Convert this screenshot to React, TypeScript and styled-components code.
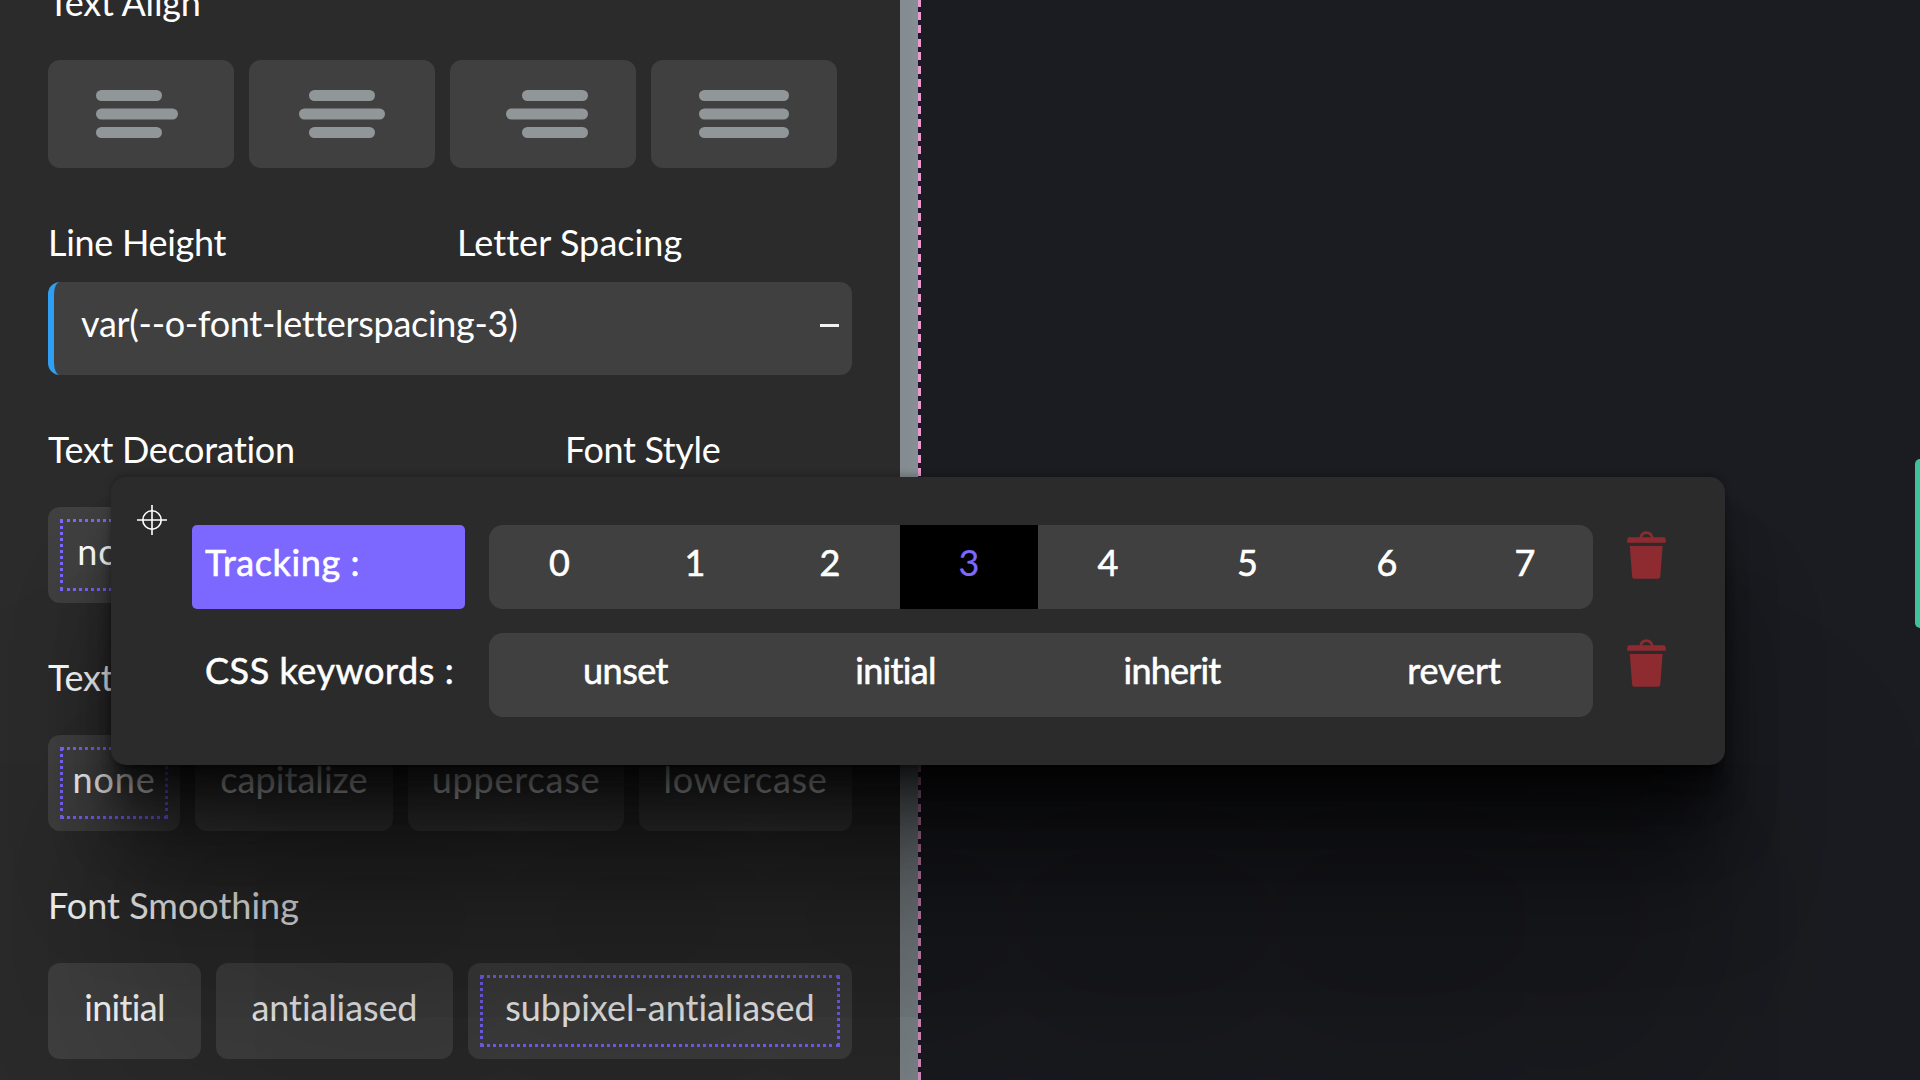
import React from 'react';
import styled, { createGlobalStyle, css } from 'styled-components';

const GlobalStyle = createGlobalStyle`
  *, *::before, *::after { box-sizing: border-box; }
  html, body { margin: 0; height: 100%; overflow: hidden; background: #1b1c21; }
`;

const Screen = styled.div`
  position: relative;
  display: flex;
  width: 1920px;
  height: 1080px;
  overflow: hidden;
  background: #1b1c21;
  color: #fff;
  font-family: Lato, 'Open Sans', sans-serif;
  font-size: 36px;
  line-height: 44px;
  font-variant-ligatures: none;
  white-space: nowrap;
`;

const Sidebar = styled.aside`
  flex: none;
  width: 900px;
  height: 1080px;
  padding: 0 48px;
  overflow: hidden;
  background: #2b2b2b;
`;

const ScrolledContent = styled.div`
  display: flex;
  flex-direction: column;
  gap: 50px;
  margin-top: -20px;
`;

const Section = styled.section<{ $gap?: number }>`
  display: flex;
  flex-direction: column;
  gap: ${(p) => p.$gap ?? 36}px;
`;

const Labels = styled.div<{ $first?: number }>`
  display: grid;
  grid-template-columns: ${(p) => (p.$first ? `${p.$first}px 1fr` : '1fr')};
  height: 45px;
`;

const SectionLabels = styled(Labels)`
  height: 44px;
  margin-bottom: 0;
`;

const Text = styled.span<{ $track?: number }>`
  letter-spacing: ${(p) => p.$track ?? 0}px;
`;

const Options = styled.div`
  display: flex;
  gap: 15px;
`;

const Option = styled.button<{ $width: number; $selected?: boolean }>`
  display: grid;
  flex: none;
  width: ${(p) => p.$width}px;
  height: 96px;
  margin-bottom: 2px;
  padding: 12px;
  border: 0;
  border-radius: 12px;
  background: #404040;
  color: inherit;
  font: inherit;

  & > span {
    display: flex;
    align-items: center;
    justify-content: center;
    padding-bottom: 8px;
    border: 3px dotted ${(p) => (p.$selected ? '#7c67ff' : 'transparent')};
  }
`;

const AlignButton = styled.button`
  display: grid;
  place-items: center;
  width: 186px;
  height: 108px;
  margin-bottom: 2px;
  padding: 0;
  border: 0;
  border-radius: 12px;
  background: #404040;
  color: #919699;
`;

const ValueField = styled.div`
  display: flex;
  align-items: center;
  justify-content: space-between;
  width: 804px;
  height: 93px;
  margin-bottom: 2px;
  padding: 0 13px 11px 27px;
  border-left: 6px solid #2f9ff4;
  border-radius: 12px;
  background: #404040;
`;

const Minus = styled.i`
  width: 19px;
  height: 3px;
  margin-top: 5px;
  background: #f2f2f2;
`;

const Resizer = styled.div`
  flex: none;
  width: 18px;
  background: linear-gradient(90deg, #858b90, #848f94);
`;

const Guide = styled.div`
  flex: none;
  width: 3px;
  background: repeating-linear-gradient(#ea9bd0 0 8px, #20152a 8px 13.42px);
  background-position: 0 -1.4px;
  background-size: 3px 1100px;
`;

const Canvas = styled.main`
  display: flex;
  flex: 1;
  justify-content: flex-end;
  padding-top: 459px;
  background: #1b1c21;
`;

const CanvasEdge = styled.div`
  width: 5px;
  height: 169px;
  border-radius: 6px 0 0 6px;
  background: #3cc29c;
`;

const shade = (a: number) => `rgb(0 0 0 / ${a}%)`;

const Popup = styled.div`
  position: absolute;
  top: 477px;
  left: 111px;
  display: flex;
  width: 1614px;
  height: 288px;
  padding: 48px 0;
  border-radius: 15px;
  background: #2b2b2b;
  box-shadow:
    0 -3px 6px 0 ${shade(20)},
    0 9px 6px -6px ${shade(29)},
    0 21px 15px -6px ${shade(30)},
    0 36px 30px -6px ${shade(33)},
    0 66px 54px -6px ${shade(36)},
    0 123px 99px -6px ${shade(37)},
    0 300px 240px -6px ${shade(33)};
`;

const Handle = styled.svg`
  flex: none;
  width: 30px;
  height: 30px;
  margin: -20.5px 25px 0 26px;
  fill: none;
  stroke: #fff;
  stroke-width: 1.6;
`;

const TokenRows = styled.div`
  display: flex;
  flex-direction: column;
  gap: 24px;
`;

const TokenRow = styled.div`
  display: flex;
  gap: 24px;
  height: 84px;
  -webkit-text-stroke: 0.6px currentColor;
`;

const TokenName = styled.div<{ $active?: boolean }>`
  display: flex;
  align-items: center;
  width: 273px;
  padding: 0 0 10px 13px;
  border-radius: 5px;
  background: ${(p) => (p.$active ? '#7c67ff' : 'transparent')};
`;

const TokenValues = styled.div<{ $columns: string }>`
  display: grid;
  grid-template-columns: ${(p) => p.$columns};
  width: 1104px;
  overflow: hidden;
  border-radius: 14px;
  background: #404040;
`;

const TokenValue = styled.div<{ $active?: boolean }>`
  display: flex;
  align-items: center;
  justify-content: center;
  padding-bottom: 10px;
  ${(p) =>
    p.$active &&
    css`
      background: #000;
      color: #7c67ff;
      -webkit-text-stroke: 0.2px currentColor;
    `}
`;

const Trash = styled.svg`
  flex: none;
  width: 40px;
  height: 48px;
  margin: 6px 0 0 9.8px;
  color: #8d2b30;
`;

const alignments: [string, [number, number][]][] = [
  ['left', [[0, 66], [0, 82], [0, 66]]],
  ['center', [[12, 66], [2, 86], [12, 66]]],
  ['right', [[24, 66], [8, 82], [24, 66]]],
  ['justify', [[0, 90], [0, 90], [0, 90]]],
];

function AlignIcon({ bars }: { bars: [number, number][] }) {
  return (
    <svg width="90" height="48" viewBox="0 0 90 48" fill="currentColor">
      {bars.map(([x, w], i) => (
        <rect key={i} x={x} y={i * 18.5} width={w} height="11" rx="5.5" />
      ))}
    </svg>
  );
}

function TrashIcon() {
  return (
    <Trash viewBox="0 0 40 48">
      <path d="M13.600 7.500C14 3.800 16.200 1.600 19.400 1.600S24.800 3.800 25.600 7.500" fill="none" stroke="currentColor" strokeWidth="2.6" />
      <path
        fill="currentColor"
        d="M2 6.200H37q1 0 1.300 1L39 10.200q.2 1.600-1.200 1.600H1.200Q-.2 11.800 0 10.200L.7 7.200Q1 6.200 2 6.200ZM2.800 15H35.600L33.300 45.600Q33.100 47.800 31 47.800H7.400Q5.300 47.800 5.100 45.600Z"
      />
    </Trash>
  );
}

type OptionItem = { text: string; width: number; track?: number; selected?: boolean };

function OptionRow({ items }: { items: OptionItem[] }) {
  return (
    <Options>
      {items.map((o) => (
        <Option key={o.text} $width={o.width} $selected={o.selected}>
          <Text $track={o.track}>{o.text}</Text>
        </Option>
      ))}
    </Options>
  );
}

export default function App() {
  return (
    <>
      <GlobalStyle />
      <Screen>
        <Sidebar>
          <ScrolledContent>
            <Section>
              <SectionLabels>
                <Text $track={-0.2}>Text Align</Text>
              </SectionLabels>
              <Options>
                {alignments.map(([name, bars]) => (
                  <AlignButton key={name} aria-label={name}>
                    <AlignIcon bars={bars} />
                  </AlignButton>
                ))}
              </Options>
            </Section>
            <Section $gap={18}>
              <SectionLabels $first={409}>
                <Text $track={-0.3}>Line Height</Text>
                <Text $track={0.08}>Letter Spacing</Text>
              </SectionLabels>
              <ValueField>
                <Text $track={-0.3}>var(--o-font-letterspacing-3)</Text>
                <Minus />
              </ValueField>
            </Section>
            <Section>
              <SectionLabels $first={517}>
                <Text $track={-0.33}>Text Decoration</Text>
                <Text $track={-0.35}>Font Style</Text>
              </SectionLabels>
              <OptionRow items={[{ text: 'none', width: 142, track: 1, selected: true }]} />
            </Section>
            <Section>
              <SectionLabels>
                <Text $track={-0.3}>Text</Text>
              </SectionLabels>
              <OptionRow
                items={[
                  { text: 'none', width: 132, track: 0.9, selected: true },
                  { text: 'capitalize', width: 198, track: 0.05 },
                  { text: 'uppercase', width: 216, track: 0.8 },
                  { text: 'lowercase', width: 213, track: 0.7 },
                ]}
              />
            </Section>
            <Section>
              <SectionLabels>
                <Text>Font Smoothing</Text>
              </SectionLabels>
              <OptionRow
                items={[
                  { text: 'initial', width: 153, track: -0.7 },
                  { text: 'antialiased', width: 237, track: -0.1 },
                  { text: 'subpixel-antialiased', width: 384, selected: true },
                ]}
              />
            </Section>
          </ScrolledContent>
        </Sidebar>
        <Resizer />
        <Guide />
        <Canvas>
          <CanvasEdge />
        </Canvas>
        <Popup>
          <Handle viewBox="0 0 30 30">
            <circle cx="15" cy="15" r="9.2" />
            <path d="M15 0V30M0 15H30" />
          </Handle>
          <TokenRows>
            <TokenRow>
              <TokenName $active>
                <Text $track={0.6}>Tracking :</Text>
              </TokenName>
              <TokenValues $columns="141px 130px 140px 138px 140px 139px 140px 136px">
                {[0, 1, 2, 3, 4, 5, 6, 7].map((n) => (
                  <TokenValue key={n} $active={n === 3}>
                    {n}
                  </TokenValue>
                ))}
              </TokenValues>
              <TrashIcon />
            </TokenRow>
            <TokenRow>
              <TokenName>
                <Text $track={0.55}>CSS keywords :</Text>
              </TokenName>
              <TokenValues $columns="273px 267px 286px 278px">
                <TokenValue>
                  <Text $track={-0.55}>unset</Text>
                </TokenValue>
                <TokenValue>
                  <Text $track={-0.7}>initial</Text>
                </TokenValue>
                <TokenValue>
                  <Text $track={-0.8}>inherit</Text>
                </TokenValue>
                <TokenValue>
                  <Text $track={-0.1}>revert</Text>
                </TokenValue>
              </TokenValues>
              <TrashIcon />
            </TokenRow>
          </TokenRows>
        </Popup>
      </Screen>
    </>
  );
}
